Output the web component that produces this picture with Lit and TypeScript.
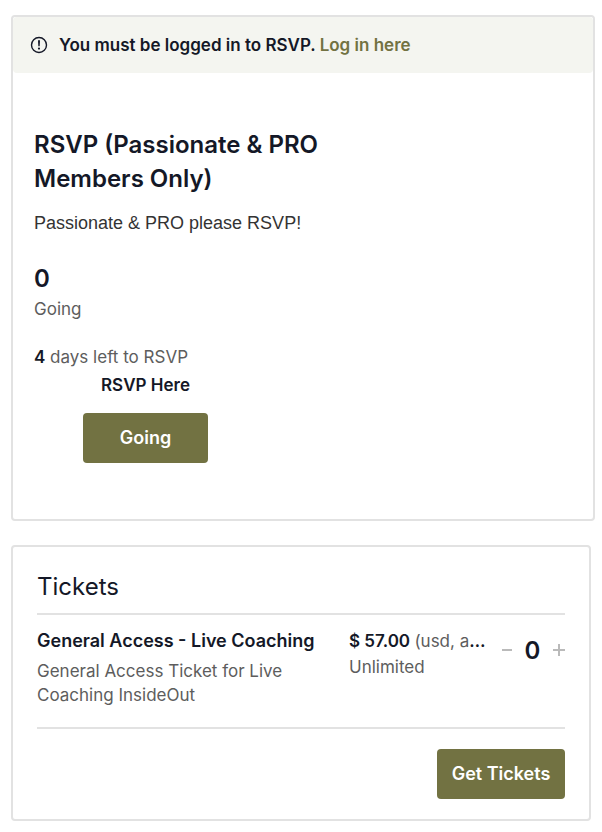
import { LitElement, html, css } from "lit";
import { customElement, state } from "lit/decorators.js";

const base = css`
  :host {
    display: block;
    color: #141827;
    font-family: Inter, "Open Sans", sans-serif;
    font-size: 17px;
    line-height: 24px;
  }
  *, *::before, *::after { box-sizing: border-box; }
  h2, h3, p { margin: 0; }
  .card {
    border: 2px solid #e2e2e2;
    border-radius: 4px;
    background: #fff;
    overflow: hidden;
  }
  .muted { color: #5d5d5d; font-weight: 400; }
  button, input { font: inherit; color: inherit; margin: 0; border: 0; }
  .primary {
    height: 50px;
    border-radius: 4px;
    background: #727242;
    color: #fff;
    font-size: 18px;
    font-weight: 600;
    padding: 0;
    cursor: pointer;
  }
`;

@customElement("rsvp-card")
class RsvpCard extends LitElement {
  static styles = [base, css`
    .notice {
      display: flex;
      align-items: center;
      gap: 11px;
      padding: 16px 17px;
      background: #f4f5f0;
      border-radius: 4px;
      font-weight: 600;
    }
    .notice svg { flex: none; }
    .notice a { color: #727242; text-decoration: none; }
    .body { padding: 55px 21px 56px; }
    .title { max-width: 300px; font-size: 24px; line-height: 34px; font-weight: 600; }
    .desc {
      margin-top: 15px;
      color: #333;
      font-family: "Liberation Sans", Arial, sans-serif;
      font-size: 18px;
    }
    .count { margin-top: 28px; font-size: 24px; line-height: 32px; font-weight: 600; }
    .line { line-height: 28px; }
    .left { margin-top: 20px; }
    b { font-weight: 600; }
    .action {
      display: flex;
      flex-direction: column;
      align-items: center;
      width: 223px;
      font-weight: 600;
    }
    .primary { width: 125px; margin-top: 14px; }
  `];

  render() {
    return html`
      <section class="card">
        <div class="notice">
          <svg width="18" height="18" viewBox="0 0 18 18" fill="none" aria-hidden="true">
            <circle cx="9" cy="9" r="7.5" stroke="#141827" stroke-width="1.4" />
            <path d="M8 4.3h2l-.3 6H8.3z" fill="#141827" />
            <circle cx="9" cy="12.6" r="1.1" fill="#141827" />
          </svg>
          <span>You must be logged in to RSVP. <a href="#login">Log in here</a></span>
        </div>
        <div class="body">
          <h2 class="title">RSVP (Passionate &amp; PRO Members Only)</h2>
          <p class="desc">Passionate &amp; PRO please RSVP!</p>
          <p class="count">0</p>
          <p class="line muted">Going</p>
          <p class="line left"><b>4</b> <span class="muted">days left to RSVP</span></p>
          <div class="action">
            <span class="line">RSVP Here</span>
            <button class="primary" type="button">Going</button>
          </div>
        </div>
      </section>
    `;
  }
}

@customElement("tickets-card")
class TicketsCard extends LitElement {
  @state() quantity = 0;

  static styles = [base, css`
    .card { padding: 23px 24px 20px; }
    .title { padding-bottom: 9px; font-size: 24px; line-height: 34px; font-weight: 400; }
    .item {
      display: grid;
      grid-template-columns: minmax(0, 1fr) 134px 63px;
      column-gap: 19px;
      padding: 13px 0 20px;
      border: solid #e2e2e2;
      border-width: 2px 0;
    }
    .name { font-size: 18px; line-height: 26px; font-weight: 600; white-space: nowrap; }
    .desc { max-width: 270px; margin-top: 5px; }
    .price { line-height: 26px; font-weight: 600; white-space: nowrap; }
    .qty { display: flex; align-items: center; justify-content: space-between; height: 44px; }
    .qty input {
      width: 24px;
      padding: 0;
      background: none;
      text-align: center;
      font-size: 24px;
      font-weight: 600;
    }
    .step { display: flex; height: 24px; padding: 0; align-items: center; background: none; cursor: pointer; }
    .footer { display: flex; justify-content: flex-end; padding-top: 20px; }
    .primary { width: 128px; }
  `];

  private step(by: number) {
    this.quantity = Math.max(0, this.quantity + by);
  }

  render() {
    return html`
      <section class="card">
        <h2 class="title">Tickets</h2>
        <div class="item">
          <div>
            <h3 class="name">General Access - Live Coaching</h3>
            <p class="desc muted">General Access Ticket for Live Coaching InsideOut</p>
          </div>
          <div class="price">
            <div>$ 57.00 <span class="muted">(usd, a</span>…</div>
            <div class="muted">Unlimited</div>
          </div>
          <div class="qty">
            <button class="step" type="button" aria-label="Remove ticket" @click=${() => this.step(-1)}>
              <svg width="10" height="12" viewBox="0 0 10 12"><path d="M0 6h10" stroke="#bababa" stroke-width="2" /></svg>
            </button>
            <input type="text" inputmode="numeric" aria-label="Ticket quantity" .value=${String(this.quantity)} />
            <button class="step" type="button" aria-label="Add ticket" @click=${() => this.step(1)}>
              <svg width="12" height="12" viewBox="0 0 12 12"><path d="M0 6h12M6 0v12" stroke="#bababa" stroke-width="2" /></svg>
            </button>
          </div>
        </div>
        <div class="footer"><button class="primary" type="button">Get Tickets</button></div>
      </section>
    `;
  }
}

@customElement("app-root")
class AppRoot extends LitElement {
  static styles = css`
    :host { display: block; background: #fff; }
    main { display: flex; flex-direction: column; gap: 24px; padding: 15px 7px 11px 11px; }
    tickets-card { margin-right: 4px; }
  `;

  render() {
    return html`<main><rsvp-card></rsvp-card><tickets-card></tickets-card></main>`;
  }
}
